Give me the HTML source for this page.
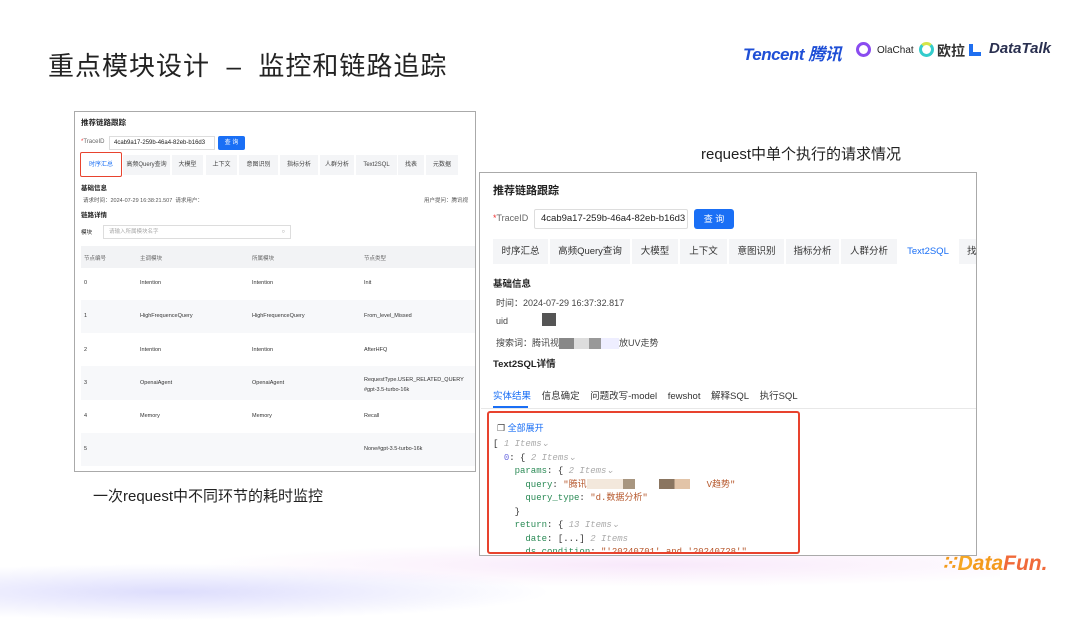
<!DOCTYPE html>
<html><head><meta charset="utf-8"><style>
*{margin:0;padding:0;box-sizing:border-box}
body{width:1080px;height:608px;overflow:hidden;background:#fff;position:relative;font-family:"Liberation Sans","Noto Sans CJK SC",sans-serif;color:#222}
.a{position:absolute;white-space:nowrap}
.bg{position:absolute;left:0;top:530px;width:1000px;height:90px;background:radial-gradient(ellipse 380px 28px at 170px 62px,rgba(180,180,250,.45),rgba(255,255,255,0)),radial-gradient(ellipse 450px 22px at 650px 35px,rgba(240,205,245,.45),rgba(255,255,255,0))}
.p{position:absolute;background:#fff;border:1px solid #aaa}
.tabL{position:absolute;top:155px;height:20px;background:#f4f5f7;font-size:6px;color:#444;text-align:center;line-height:20px}
.tabR{position:absolute;top:239px;height:25px;background:#f4f5f7;font-size:9.5px;color:#333;text-align:center;line-height:25px}
.c{font-family:"Liberation Mono","Noto Sans CJK SC",monospace;font-size:9px}
.k{color:#2a8a55}.s{color:#b5562a}.g{color:#aaa;font-style:italic}
</style></head><body>
<div class="bg"></div>
<div class="a" style="left:48px;top:46px;font-size:26px;color:#222;letter-spacing:1px">重点模块设计 &nbsp;–&nbsp; 监控和链路追踪</div>
<div class="a" style="left:743px;top:40px;font-size:17px;font-weight:bold;font-style:italic;color:#1f4fd6;letter-spacing:-0.5px">Tencent 腾讯</div>
<div class="a" style="left:856px;top:42px;width:15px;height:15px;border:3px solid #8a4cf0;border-radius:50%"></div>
<div class="a" style="left:877px;top:45px;font-size:10px;color:#222">OlaChat</div>
<div class="a" style="left:919px;top:42px;width:15px;height:15px;border:3px solid #3cc;border-radius:50%;border-top-color:#d4e44a"></div>
<div class="a" style="left:937px;top:41px;font-size:14px;font-weight:bold;color:#333">欧拉</div>
<div class="a" style="left:969px;top:44px;width:12px;height:12px;border-left:4px solid #1f6ff0;border-bottom:4px solid #1f6ff0"></div>
<div class="a" style="left:989px;top:40px;font-size:15px;font-style:italic;font-weight:bold;color:#2a3050">DataTalk</div>

<div class="a" style="left:701px;top:143px;font-size:15px">request中单个执行的请求情况</div>
<div class="a" style="left:93px;top:485px;font-size:15px">一次request中不同环节的耗时监控</div>
<div class="a" style="left:940px;top:551px;font-size:21px;font-weight:bold;font-style:italic;color:#f39a1c">⁙<span style="color:#f5a623">D</span>ata<span style="color:#f06a3a">Fun.</span></div>

<!-- left panel -->
<div class="p" style="left:74px;top:111px;width:402px;height:361px"></div>
<div class="a" style="left:81px;top:117px;font-size:7.5px;font-weight:bold">推荐链路跟踪</div>
<div class="a" style="left:81px;top:139px;font-size:6px;color:#666"><span style="color:#e33">*</span>TraceID</div>
<div class="a" style="left:109px;top:136px;width:106px;height:14px;border:1px solid #ddd;font-size:6px;line-height:12px;padding-left:4px">4cab9a17-259b-46a4-82eb-b16d3</div>
<div class="a" style="left:218px;top:136px;width:27px;height:14px;background:#1a6ff5;color:#fff;font-size:6px;text-align:center;line-height:14px;border-radius:2px">查 询</div>
<div class="tabL" style="left:82px;width:38px;background:#fff;color:#1a6ff5">时序汇总</div>
<div class="a" style="left:80px;top:152px;width:42px;height:25px;border:1.5px solid #e8432e;border-radius:2px"></div>
<div class="tabL" style="left:123px;width:47px">高频Query查询</div>
<div class="tabL" style="left:172px;width:31px">大模型</div>
<div class="tabL" style="left:206px;width:31px">上下文</div>
<div class="tabL" style="left:239px;width:39px">意图识别</div>
<div class="tabL" style="left:280px;width:38px">指标分析</div>
<div class="tabL" style="left:320px;width:34px">人群分析</div>
<div class="tabL" style="left:356px;width:41px">Text2SQL</div>
<div class="tabL" style="left:398px;width:26px">找表</div>
<div class="tabL" style="left:426px;width:32px">元数据</div>
<div class="a" style="left:81px;top:182px;font-size:6.5px;font-weight:bold">基础信息</div>
<div class="a" style="left:83px;top:196px;font-size:5.5px;color:#555">请求时间：2024-07-29 16:38:21.507 &nbsp;请求用户：</div>
<div class="a" style="left:424px;top:196px;font-size:5.5px;color:#555">用户提问：腾讯视</div>
<div class="a" style="left:81px;top:209px;font-size:6.5px;font-weight:bold">链路详情</div>
<div class="a" style="left:81px;top:228px;font-size:5.5px">模块</div>
<div class="a" style="left:103px;top:225px;width:188px;height:14px;border:1px solid #ddd;font-size:5.5px;color:#aaa;line-height:12px;padding-left:5px">请输入所属模块名字<span style="position:absolute;right:5px;color:#888">○</span></div>
<div class="a" style="left:81px;top:246px;width:394px;height:22px;background:#f2f3f5"></div>
<div class="a" style="left:84px;top:254px;font-size:5.5px;color:#666">节点编号</div>
<div class="a" style="left:140px;top:254px;font-size:5.5px;color:#666">主调模块</div>
<div class="a" style="left:252px;top:254px;font-size:5.5px;color:#666">所属模块</div>
<div class="a" style="left:364px;top:254px;font-size:5.5px;color:#666">节点类型</div>
<div class="a" style="left:81px;top:300px;width:394px;height:33px;background:#f7f8fa"></div>
<div class="a" style="left:81px;top:366px;width:394px;height:34px;background:#f7f8fa"></div>
<div class="a" style="left:81px;top:433px;width:394px;height:33px;background:#f7f8fa"></div>
<div class="a" style="left:84px;top:267px;font-size:5.5px;line-height:33.3px;color:#333">0<br>1<br>2<br>3<br>4<br>5</div>
<div class="a" style="left:140px;top:267px;font-size:5.5px;line-height:33.3px;color:#333">Intention<br>HighFrequenceQuery<br>Intention<br>OpenaiAgent<br>Memory<br>&nbsp;</div>
<div class="a" style="left:252px;top:267px;font-size:5.5px;line-height:33.3px;color:#333">Intention<br>HighFrequenceQuery<br>Intention<br>OpenaiAgent<br>Memory<br>&nbsp;</div>
<div class="a" style="left:364px;top:267px;font-size:5.5px;line-height:33.3px;color:#333">Init<br>From_level_Missed<br>AfterHFQ<br>&nbsp;<br>Recall<br>None#gpt-3.5-turbo-16k</div>
<div class="a" style="left:364px;top:375px;font-size:5.5px;line-height:10px;color:#333">RequestType.USER_RELATED_QUERY<br>#gpt-3.5-turbo-16k</div>

<!-- right panel -->
<div class="p" style="left:479px;top:172px;width:498px;height:384px"></div>
<div class="a" style="left:493px;top:182px;font-size:11px;font-weight:bold">推荐链路跟踪</div>
<div class="a" style="left:493px;top:213px;font-size:9px;color:#666"><span style="color:#e33">*</span>TraceID</div>
<div class="a" style="left:534px;top:209px;width:154px;height:20px;border:1px solid #ddd;border-radius:2px;font-size:9.5px;line-height:18px;padding-left:6px;overflow:hidden">4cab9a17-259b-46a4-82eb-b16d3</div>
<div class="a" style="left:694px;top:209px;width:40px;height:20px;background:#1a6ff5;color:#fff;font-size:9px;text-align:center;line-height:20px;border-radius:3px">查 询</div>
<div class="tabR" style="left:493px;width:55px">时序汇总</div>
<div class="tabR" style="left:550px;width:80px">高频Query查询</div>
<div class="tabR" style="left:632px;width:46px">大模型</div>
<div class="tabR" style="left:680px;width:47px">上下文</div>
<div class="tabR" style="left:729px;width:55px">意图识别</div>
<div class="tabR" style="left:786px;width:53px">指标分析</div>
<div class="tabR" style="left:841px;width:56px">人群分析</div>
<div class="tabR" style="left:899px;width:58px;background:#fff;color:#1a6ff5">Text2SQL</div>
<div class="tabR" style="left:959px;width:17px;text-align:left;padding-left:8px">找</div>
<div class="a" style="left:493px;top:276px;font-size:9.5px;font-weight:bold">基础信息</div>
<div class="a" style="left:496px;top:296px;font-size:9px;color:#444">时间：2024-07-29 16:37:32.817</div>
<div class="a" style="left:496px;top:316px;font-size:9px;color:#444">uid</div>
<div class="a" style="left:542px;top:313px;width:14px;height:13px;background:#555"></div>
<div class="a" style="left:496px;top:336px;font-size:9px;color:#444">搜索词：腾讯视<span style="display:inline-block;width:60px;height:11px;vertical-align:middle;background:linear-gradient(90deg,#888 0 25%,#ddd 25% 50%,#999 50% 70%,#eef 70%)"></span>放UV走势</div>
<div class="a" style="left:493px;top:356px;font-size:9.5px;font-weight:bold">Text2SQL详情</div>
<div class="a" style="left:493px;top:388px;font-size:9.5px;color:#333"><span style="color:#1a6ff5">实体结果</span>&nbsp;&nbsp;&nbsp;&nbsp;信息确定&nbsp;&nbsp;&nbsp;&nbsp;问题改写-model&nbsp;&nbsp;&nbsp;&nbsp;fewshot&nbsp;&nbsp;&nbsp;&nbsp;解释SQL&nbsp;&nbsp;&nbsp;&nbsp;执行SQL</div>
<div class="a" style="left:481px;top:408px;width:495px;height:1px;background:#e8e8e8"></div>
<div class="a" style="left:493px;top:406px;width:35px;height:2px;background:#1a6ff5"></div>
<div class="a" style="left:487px;top:411px;width:313px;height:143px;border:2px solid #e8432e;border-radius:3px;overflow:hidden">
<div class="a" style="left:8px;top:8px;font-size:9px;color:#1a6ff5"><span style="color:#444">❐</span> 全部展开</div>
<div class="a c" style="left:4px;top:25px;line-height:13.5px;color:#333">
[ <span class="g">1 Items⌄</span><br>
&nbsp;&nbsp;<span style="color:#6b6be0">0</span>: { <span class="g">2 Items⌄</span><br>
&nbsp;&nbsp;&nbsp;&nbsp;<span class="k">params</span>: { <span class="g">2 Items⌄</span><br>
&nbsp;&nbsp;&nbsp;&nbsp;&nbsp;&nbsp;<span class="k">query</span>: <span class="s">"腾讯<span style="display:inline-block;width:120px;height:10px;vertical-align:middle;background:linear-gradient(90deg,#f3e8dc 0 30%,#a89680 30% 40%,#fff 40% 60%,#8a7560 60% 73%,#e2c4a8 73% 86%,#fff 86%)"></span>V趋势"</span><br>
&nbsp;&nbsp;&nbsp;&nbsp;&nbsp;&nbsp;<span class="k">query_type</span>: <span class="s">"d.数据分析"</span><br>
&nbsp;&nbsp;&nbsp;&nbsp;}<br>
&nbsp;&nbsp;&nbsp;&nbsp;<span class="k">return</span>: { <span class="g">13 Items⌄</span><br>
&nbsp;&nbsp;&nbsp;&nbsp;&nbsp;&nbsp;<span class="k">date</span>: [...] <span class="g">2 Items</span><br>
&nbsp;&nbsp;&nbsp;&nbsp;&nbsp;&nbsp;<span class="k">ds_condition</span>: <span class="s">"'20240701' and '20240728'"</span>
</div></div>
</body></html>
